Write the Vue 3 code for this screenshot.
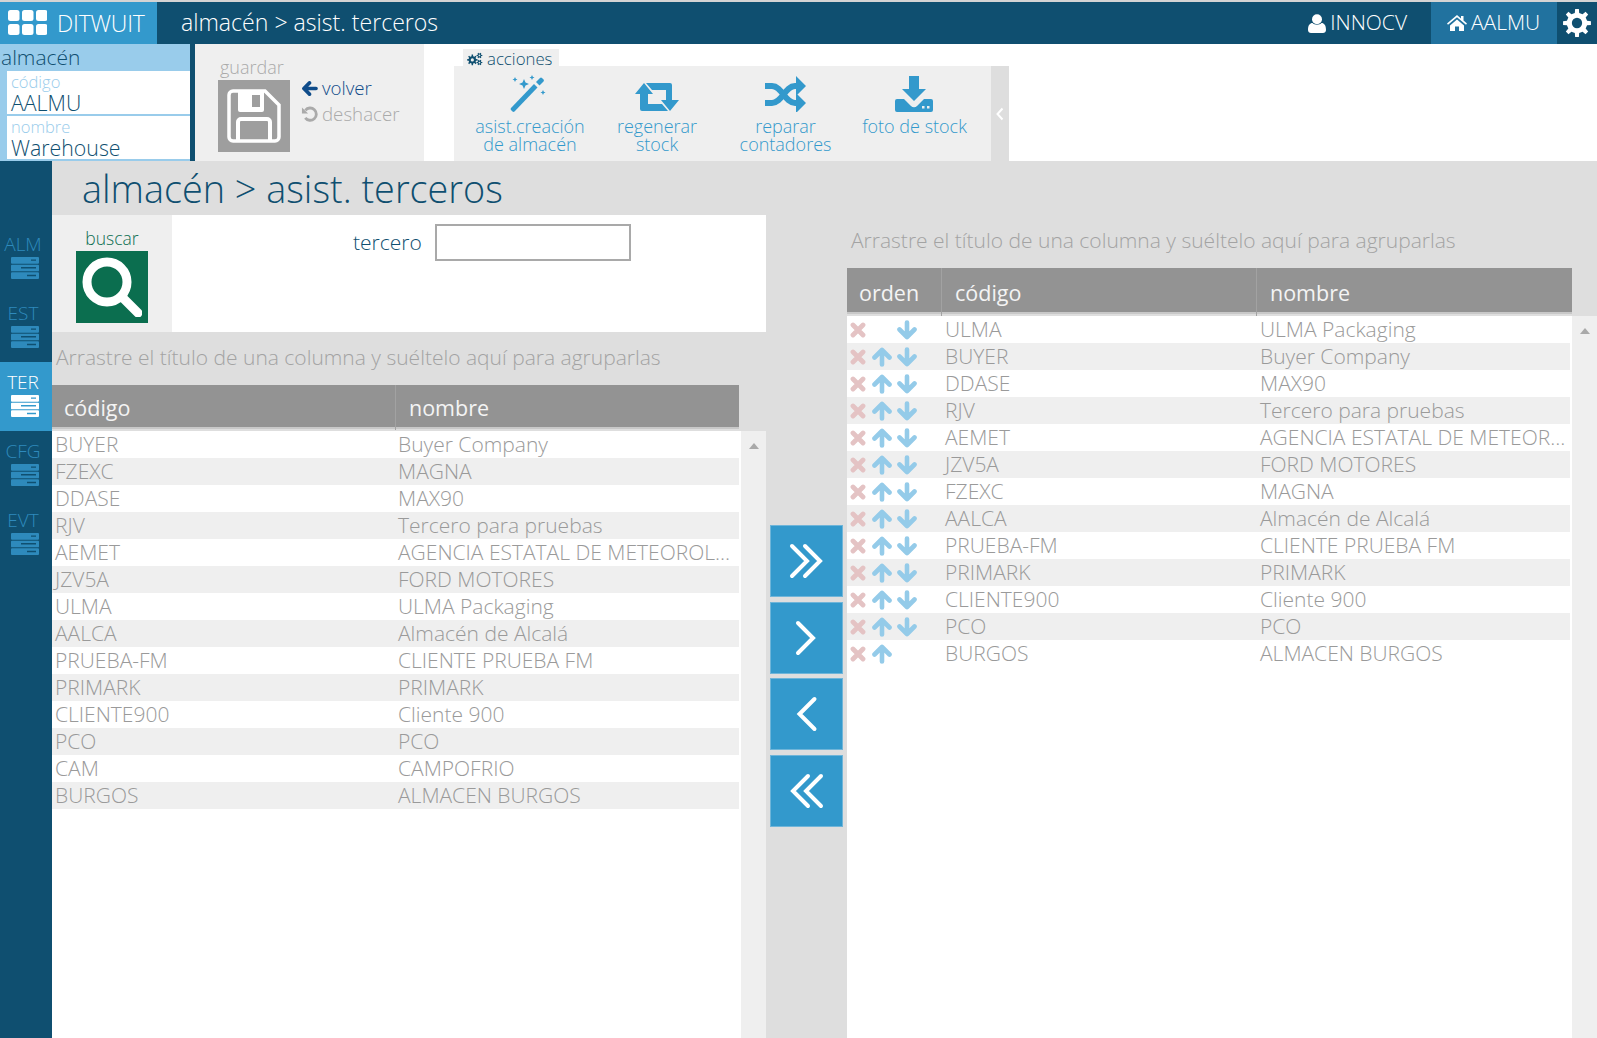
<template>
  <div class="app">
    <svg class="defs" width="0" height="0">
      <defs>
        <symbol id="server" viewBox="0 0 28 23" preserveAspectRatio="none">
          <path d="M0 1a1 1 0 0 1 1-1h26a1 1 0 0 1 1 1v5a1 1 0 0 1-1 1H1a1 1 0 0 1-1-1zM20 2.500V4h5V2.500zM0 9a1 1 0 0 1 1-1h26a1 1 0 0 1 1 1v5a1 1 0 0 1-1 1H1a1 1 0 0 1-1-1zM10 10.500V12h15v-1.500zM0 17a1 1 0 0 1 1-1h26a1 1 0 0 1 1 1v5a1 1 0 0 1-1 1H1a1 1 0 0 1-1-1zM16 18.500V20h9v-1.500z" fill-rule="evenodd" fill="currentColor" />
        </symbol>
        <symbol id="times" viewBox="0 0 16 16">
          <path d="M3 3l10 10M13 3L3 13" stroke="currentColor" stroke-width="4.800" stroke-linecap="round" fill="none" />
        </symbol>
        <symbol id="up" viewBox="0 0 20 20">
          <path d="M10 17.500V4M2.500 10.500L10 3l7.500 7.500" stroke="currentColor" stroke-width="4.600" stroke-linecap="round" stroke-linejoin="round" fill="none" />
        </symbol>
        <symbol id="down" viewBox="0 0 20 20">
          <path d="M10 2.500V16M2.500 9.500L10 17l7.500-7.500" stroke="currentColor" stroke-width="4.600" stroke-linecap="round" stroke-linejoin="round" fill="none" />
        </symbol>
      </defs>
    </svg>

    <header class="topbar">
      <div class="brand">
        <svg class="grid-icon" viewBox="0 0 39 26" width="39" height="26">
          <rect v-for="c in brandDots" :key="c.x + '-' + c.y" :x="c.x" :y="c.y" width="11.5" height="11" rx="2.5" fill="#fff" />
        </svg>
        <span>DITWUIT</span>
      </div>
      <div class="crumb">almacén &gt; asist. terceros</div>
      <div class="top-right">
        <div class="top-link">
          <svg viewBox="0 0 18 19" width="18" height="19"><circle cx="9" cy="5.2" r="5" fill="#fff" /><path d="M0 16c0-5 2-7 4.500-7 1 1 2.700 1.700 4.500 1.700S12.500 10 13.500 9C16 9 18 11 18 16c0 2-1.400 3-3 3H3c-1.600 0-3-1-3-3z" fill="#fff" /></svg>
          INNOCV
        </div>
        <div class="top-link active">
          <svg viewBox="0 0 20 16" width="20" height="16"><path d="M10 0L0 8.500l1 1.200L10 2.200l9 7.500 1-1.200-3.500-3V1h-2.500v2.500zM3 10.500V16h5v-4.500h4V16h5v-5.500L10 4.500z" fill="#fff" /></svg>
          AALMU
        </div>
        <div class="top-gear">
          <svg viewBox="0 0 32 32" width="30" height="30"><path :d="gear(16, 16, 15, 11, 5.500, 8)" fill="#fff" fill-rule="evenodd" /></svg>
        </div>
      </div>
    </header>

    <section class="ribbon">
      <div class="entity">
        <div class="entity-title">almacén</div>
        <div class="entity-field">
          <label>código</label>
          <span>AALMU</span>
        </div>
        <div class="entity-field">
          <label>nombre</label>
          <span>Warehouse</span>
        </div>
      </div>

      <div class="save-box">
        <div class="save-col">
          <div class="save-label">guardar</div>
          <div class="save-btn">
            <svg viewBox="0 0 54 54" width="54" height="54">
              <path d="M2 6a4 4 0 0 1 4-4h32l14 14v32a4 4 0 0 1-4 4H6a4 4 0 0 1-4-4z" fill="none" stroke="#fff" stroke-width="3.500" />
              <path d="M11 3v18a2 2 0 0 0 2 2h22a2 2 0 0 0 2-2V3z" fill="#fff" />
              <rect x="25" y="6" width="8" height="12" fill="#9e9e9e" />
              <path d="M11 51V33a3 3 0 0 1 3-3h26a3 3 0 0 1 3 3v18" fill="none" stroke="#fff" stroke-width="4" />
            </svg>
          </div>
        </div>
        <div class="save-links">
          <div class="link-back">
            <svg viewBox="0 0 18 16" width="17" height="15"><path d="M16 8H4M9 2L3 8l6 6" stroke="#0f4c8a" stroke-width="3.800" fill="none" stroke-linecap="round" stroke-linejoin="round" /></svg>
            volver
          </div>
          <div class="link-undo">
            <svg viewBox="0 0 18 18" width="17" height="17"><path d="M4.500 12.500A6.500 6.500 0 1 0 4.600 4.600" stroke="#aaa" stroke-width="3" fill="none" /><path d="M1 1.500v6.500h6.500z" fill="#aaa" /></svg>
            deshacer
          </div>
        </div>
      </div>

      <div class="actions">
        <div class="actions-tab">
          <svg viewBox="0 0 18 15" width="16" height="14">
            <path :d="gear(6, 8.500, 6, 4.300, 1.800, 8)" fill="#0f4f70" fill-rule="evenodd" />
            <path :d="gear(14, 3.500, 3.300, 2.300, 1, 6)" fill="#0f4f70" fill-rule="evenodd" />
            <path :d="gear(14, 11.500, 3.300, 2.300, 1, 6)" fill="#0f4f70" fill-rule="evenodd" />
          </svg>
          acciones
        </div>
        <div class="actions-body">
          <div class="action a1">
            <svg viewBox="0 0 38 40" width="38" height="40">
              <path d="M2 34L25 10l3.500 3.500L5.500 37.500a1.500 1.500 0 0 1-2 0L2 36a1.500 1.500 0 0 1 0-2z" fill="#3399cc" />
              <path d="M27 8l4-4a1.500 1.500 0 0 1 2 0l1.500 1.500a1.500 1.500 0 0 1 0 2l-4 4z" fill="#3399cc" />
              <path d="M15 5l1.500 3.500L20 10l-3.500 1.500L15 15l-1.500-3.500L10 10l3.500-1.500zM6 3l.8 1.700 1.700.8-1.700.8L6 8l-.8-1.700-1.700-.8 1.700-.8zM23 1l.8 1.700 1.700.8-1.700.8-.8 1.700-.8-1.700-1.700-.8 1.700-.8zM34 16l.8 1.700 1.700.8-1.700.8-.8 1.700-.8-1.700-1.700-.8 1.700-.8z" fill="#3399cc" />
            </svg>
            <div>asist.creación<br />de almacén</div>
          </div>
          <div class="action a2">
            <svg viewBox="0 0 44 30" width="44" height="30">
              <path d="M0 12L9 1l9 11h-5v10h14l6 7H7a2 2 0 0 1-2-2V12zM11 1h24a2 2 0 0 1 2 2v0 15h7l-9 11-9-11h5V8H17z" fill="#3399cc" />
            </svg>
            <div>regenerar<br />stock</div>
          </div>
          <div class="action a3">
            <svg viewBox="0 0 42 36" width="42" height="36">
              <path d="M1 10h7c10 0 13 17 23 17h3M1 27h7c10 0 13-17 23-17h3" stroke="#3399cc" stroke-width="6" fill="none" />
              <path d="M32 0l10 10-10 10zM32 17l10 10-10 10z" fill="#3399cc" />
            </svg>
            <div>reparar<br />contadores</div>
          </div>
          <div class="action a4">
            <svg viewBox="0 0 38 36" width="38" height="36">
              <path d="M14 0h10v13h7L19 25 7 13h7z" fill="#3399cc" />
              <path d="M0 25a2 2 0 0 1 2-2h7l7 7a4 4 0 0 0 6 0l7-7h7a2 2 0 0 1 2 2v9a2 2 0 0 1-2 2H2a2 2 0 0 1-2-2z" fill="#3399cc" />
              <rect x="27" y="30" width="2.500" height="2.500" fill="#efefef" /><rect x="32" y="30" width="2.500" height="2.500" fill="#efefef" />
            </svg>
            <div>foto de stock</div>
          </div>
        </div>
        <div class="actions-collapse">
          <svg viewBox="0 0 8 14" width="8" height="14"><path d="M6.500 1.500L1.500 7l5 5.500" stroke="#fff" stroke-width="2" fill="none" /></svg>
        </div>
      </div>
    </section>

    <div class="workspace">
      <nav class="sidenav">
        <div v-for="item in navItems" :key="item" class="nav-item" :class="{ active: item === 'TER' }">
          <span>{{ item }}</span>
          <svg width="28" height="22"><use href="#server" width="28" height="22" /></svg>
        </div>
      </nav>

      <main class="content">
        <h1 class="page-title">almacén &gt; asist. terceros</h1>
        <div class="columns">
          <div class="left-col">
            <div class="search-row">
              <div class="search-btn-box">
                <div class="search-label">buscar</div>
                <div class="search-btn">
                  <svg viewBox="0 0 60 60" width="60" height="60">
                    <circle cx="25" cy="25" r="20" fill="none" stroke="#fff" stroke-width="9" />
                    <path d="M40 40l16 16" stroke="#fff" stroke-width="9" stroke-linecap="round" />
                  </svg>
                </div>
              </div>
              <div class="search-fields">
                <label>tercero</label>
                <input type="text" />
              </div>
            </div>
            <div class="group-bar">Arrastre el título de una columna y suéltelo aquí para agruparlas</div>
            <div class="grid-head left-grid">
              <div>código</div>
              <div>nombre</div>
            </div>
            <div class="grid-body">
              <div class="rows">
                <div v-for="row in available" :key="row[0]" class="row left-grid">
                  <div class="cell">{{ row[0] }}</div>
                  <div class="cell">{{ row[1] }}</div>
                </div>
              </div>
              <div class="scroll"><i></i></div>
            </div>
          </div>

          <div class="move-col">
            <button v-for="b in moveButtons" :key="b" class="move-btn">
              <svg viewBox="0 0 40 40" width="40" height="40"><path :d="b" stroke="#fff" stroke-width="4" fill="none" stroke-linecap="round" /></svg>
            </button>
          </div>

          <div class="right-col">
            <div class="group-bar">Arrastre el título de una columna y suéltelo aquí para agruparlas</div>
            <div class="grid-head right-grid">
              <div>orden</div>
              <div>código</div>
              <div>nombre</div>
            </div>
            <div class="grid-body">
              <div class="rows">
                <div v-for="(row, i) in assigned" :key="row[0]" class="row right-grid">
                  <div class="order-cell">
                    <svg class="ic-x" width="16" height="16"><use href="#times" /></svg>
                    <svg class="ic-a" width="20" height="20" :class="{ hidden: i === 0 }"><use href="#up" /></svg>
                    <svg class="ic-a" width="20" height="20" :class="{ hidden: i === assigned.length - 1 }"><use href="#down" /></svg>
                  </div>
                  <div class="cell">{{ row[0] }}</div>
                  <div class="cell">{{ row[1] }}</div>
                </div>
              </div>
              <div class="scroll"><i></i></div>
            </div>
          </div>
        </div>
      </main>
    </div>
  </div>
</template>

<script setup>
const navItems = ['ALM', 'EST', 'TER', 'CFG', 'EVT']

const brandDots = [0, 14, 28].flatMap((x) => [0, 14].map((y) => ({ x, y })))

const moveButtons = [
  'M5 5l15 15-15 15M18 5l15 15-15 15',
  'M11 5l15 15-15 15',
  'M27.500 5L12.500 20l15 15',
  'M21 5L6 20l15 15M34 5L19 20l15 15',
]

const available = [
  ['BUYER', 'Buyer Company'],
  ['FZEXC', 'MAGNA'],
  ['DDASE', 'MAX90'],
  ['RJV', 'Tercero para pruebas'],
  ['AEMET', 'AGENCIA ESTATAL DE METEOROLOGIA'],
  ['JZV5A', 'FORD MOTORES'],
  ['ULMA', 'ULMA Packaging'],
  ['AALCA', 'Almacén de Alcalá'],
  ['PRUEBA-FM', 'CLIENTE PRUEBA FM'],
  ['PRIMARK', 'PRIMARK'],
  ['CLIENTE900', 'Cliente 900'],
  ['PCO', 'PCO'],
  ['CAM', 'CAMPOFRIO'],
  ['BURGOS', 'ALMACEN BURGOS'],
]

const assigned = [
  ['ULMA', 'ULMA Packaging'],
  ['BUYER', 'Buyer Company'],
  ['DDASE', 'MAX90'],
  ['RJV', 'Tercero para pruebas'],
  ['AEMET', 'AGENCIA ESTATAL DE METEOROLOGIA'],
  ['JZV5A', 'FORD MOTORES'],
  ['FZEXC', 'MAGNA'],
  ['AALCA', 'Almacén de Alcalá'],
  ['PRUEBA-FM', 'CLIENTE PRUEBA FM'],
  ['PRIMARK', 'PRIMARK'],
  ['CLIENTE900', 'Cliente 900'],
  ['PCO', 'PCO'],
  ['BURGOS', 'ALMACEN BURGOS'],
]

// toothed wheel with a round hole, for the cog icons
const gear = (cx, cy, outer, inner, hole, teeth) => {
  const pts = []
  const step = (Math.PI * 2) / teeth
  for (let i = 0; i < teeth; i++) {
    const a = i * step
    const w = step * 0.2
    const pt = (r, t) => `${(cx + r * Math.cos(t)).toFixed(2)} ${(cy + r * Math.sin(t)).toFixed(2)}`
    pts.push(pt(inner, a - w * 1.35), pt(outer, a - w * 0.85), pt(outer, a + w * 0.85), pt(inner, a + w * 1.35))
  }
  return `M${pts.join('L')}ZM${cx - hole} ${cy}a${hole} ${hole} 0 1 0 ${hole * 2} 0a${hole} ${hole} 0 1 0 ${-hole * 2} 0Z`
}
</script>

<style>
html,
body {
  margin: 0;
  background: #fff;
}
</style>

<style scoped>
* {
  box-sizing: border-box;
}

.app {
  width: 1597px;
  height: 1038px;
  overflow: hidden;
  display: flex;
  flex-direction: column;
  font-family: 'Open Sans', 'Liberation Sans', sans-serif;
  font-weight: 300;
  border-top: 2px solid #d4d4d4;
}

.defs {
  position: absolute;
}

.topbar {
  height: 42px;
  flex: none;
  display: flex;
  align-items: center;
  background: #0f4f70;
  color: #fff;
}

.brand {
  width: 157px;
  height: 100%;
  background: #3399cc;
  display: flex;
  align-items: center;
  gap: 10px;
  padding-left: 8px;
  font-size: 23px;
  letter-spacing: -0.2px;
}

.brand span {
  padding-bottom: 1px;
}

.crumb {
  margin-left: 24px;
  padding-bottom: 2px;
  font-size: 23.100px;
}

.top-right {
  margin-left: auto;
  display: flex;
  height: 100%;
}

.top-link {
  display: flex;
  align-items: center;
  gap: 4px;
  font-size: 21px;
  padding: 0 24px 2px 0;
}

.top-link svg {
  margin-top: 2px;
}

.top-link.active {
  width: 126px;
  padding: 0 0 2px 16px;
  background: #21729f;
}

.top-gear {
  width: 40px;
  display: flex;
  align-items: center;
  justify-content: center;
}

.ribbon {
  height: 117px;
  flex: none;
  display: flex;
}

.entity {
  width: 195px;
  background: #99cceb;
  border-right: 5px solid #0f4f70;
  color: #0f4f70;
}

.entity-title {
  height: 27px;
  line-height: 27px;
  padding-left: 1px;
  font-size: 21px;
}

.entity-field {
  margin-left: 7px;
  height: 45px;
  background: #fff;
  border-bottom: 2px solid #99cceb;
  display: flex;
  flex-direction: column;
  padding-left: 4px;
  line-height: 21px;
}

.entity-field label {
  font-size: 16.500px;
  color: #99cceb;
}

.entity-field span {
  font-size: 21.300px;
}

.save-box {
  width: 229px;
  background: #efefef;
  display: flex;
  padding: 11px 0 0 23px;
}

.save-label {
  color: #aaa;
  font-size: 18px;
  line-height: 25px;
  padding-left: 2px;
}

.save-btn {
  width: 72px;
  height: 72px;
  background: #9e9e9e;
  display: flex;
  align-items: center;
  justify-content: center;
}

.save-links {
  padding: 20px 0 0 11px;
  font-size: 18.700px;
  line-height: 26px;
}

.link-back {
  color: #0f4c8a;
  display: flex;
  align-items: center;
  gap: 4px;
}

.link-undo {
  color: #aaa;
  display: flex;
  align-items: center;
  gap: 4px;
}

.actions {
  margin-left: 30px;
  width: 555px;
  display: grid;
  grid-template-columns: 537px 18px;
  grid-template-rows: 22px 95px;
}

.actions-tab {
  grid-column: 1 / 3;
  margin: 5px 0 0 9px;
  width: 96px;
  height: 17px;
  background: #efefef;
  color: #0f4f70;
  font-size: 16.800px;
  line-height: 19px;
  display: flex;
  align-items: flex-start;
  gap: 4px;
  padding-left: 4px;
}

.actions-tab svg {
  margin-top: 3px;
}

.actions-body {
  background: #efefef;
  display: flex;
  color: #3399cc;
  font-size: 18px;
  line-height: 18px;
  text-align: center;
}

.action {
  display: flex;
  flex-direction: column;
  align-items: center;
  justify-content: flex-end;
  height: 87px;
  width: 129px;
  gap: 5px;
  white-space: nowrap;
}

.action.a1 {
  width: 152px;
  gap: 3px;
}

.action.a1 svg {
  margin-left: -4px;
}

.action.a2 {
  width: 102px;
}

.action.a3 {
  width: 155px;
}

.action.a3 svg {
  margin-left: -2px;
}

.action.a4 {
  width: 103px;
  justify-content: flex-start;
  padding-top: 10px;
}

.action.a4 svg {
  margin-left: -2px;
}

.actions-collapse {
  background: #dedede;
  display: flex;
  align-items: center;
  justify-content: center;
}

.workspace {
  flex: 1;
  display: flex;
  min-height: 0;
}

.sidenav {
  width: 52px;
  flex: none;
  background: #0f4f70;
  padding-top: 63px;
  color: #2e8abc;
}

.nav-item {
  height: 69px;
  display: flex;
  flex-direction: column;
  align-items: center;
  padding: 8px 6px 0 0;
  font-size: 19px;
  line-height: 25px;
}

.nav-item.active {
  background: #3399cc;
  color: #fff;
}

.nav-item svg {
  margin-left: 3px;
}

.content {
  flex: 1;
  background: #dedede;
  display: flex;
  flex-direction: column;
  min-width: 0;
}

.page-title {
  margin: 0;
  height: 54px;
  line-height: 56px;
  padding-left: 30px;
  font-size: 37.800px;
  font-weight: 300;
  color: #0f4f70;
}

.columns {
  flex: 1;
  display: flex;
  min-height: 0;
}

.left-col {
  width: 714px;
  display: flex;
  flex-direction: column;
}

.right-col {
  flex: 1;
  display: flex;
  flex-direction: column;
  min-width: 0;
}

.search-row {
  height: 117px;
  flex: none;
  display: flex;
  background: #fff;
}

.search-btn-box {
  width: 120px;
  background: #efefef;
  display: flex;
  flex-direction: column;
  align-items: center;
  padding-top: 11px;
}

.search-label {
  color: #0b6e4f;
  font-size: 17.500px;
  line-height: 25px;
}

.search-btn {
  width: 72px;
  height: 72px;
  background: #0b6e4f;
  display: flex;
  align-items: center;
  justify-content: center;
}

.search-fields {
  display: flex;
  align-items: center;
  align-self: flex-start;
  padding: 9px 0 0 181px;
  gap: 13px;
}

.search-fields label {
  color: #0f4f70;
  font-size: 21px;
  margin-top: -2px;
}

.search-fields input {
  width: 196px;
  height: 37px;
  border: 2px solid #a9a9a9;
  background: #fff;
}

.group-bar {
  height: 53px;
  flex: none;
  line-height: 50px;
  padding-left: 4px;
  font-size: 21px;
  color: #a3a3a3;
}

.grid-head {
  flex: none;
  height: 44px;
  margin-right: 27px;
  background: #939393;
  color: #f4f4f4;
  font-size: 21.500px;
  font-weight: 400;
  line-height: 45px;
  border-bottom: 2px solid #c8c8c8;
}

.right-col .grid-head {
  height: 46px;
  margin-right: 25px;
  line-height: 50px;
}

.grid-head > div {
  padding-left: 12px;
  border-left: 1px solid #a2a2a2;
}

.grid-head > div:first-child {
  border-left: 0;
}

.left-grid {
  display: grid;
  grid-template-columns: 343px 1fr;
}

.grid-head.left-grid > div + div {
  padding-left: 13px;
}

.right-grid {
  display: grid;
  grid-template-columns: 94px 315px 1fr;
}

.right-col .grid-head > div + div {
  padding-left: 13px;
}

.grid-body {
  flex: 1;
  display: flex;
  min-height: 0;
  background: #fff;
  margin-top: 2px;
}

.rows {
  flex: 1;
  min-width: 0;
  margin-right: 2px;
}

.row {
  height: 27px;
  line-height: 27px;
  font-size: 21px;
  color: #9a9a9a;
}

.row:nth-child(even) {
  background: #efefef;
}

.cell {
  padding-left: 3px;
  padding-right: 2px;
  overflow: hidden;
  white-space: nowrap;
  text-overflow: ellipsis;
}

.right-grid .cell {
  padding-left: 4px;
}

.scroll {
  width: 25px;
  flex: none;
  background: #efefef;
  display: flex;
  justify-content: center;
  padding-top: 12px;
}

.scroll i {
  width: 0;
  height: 0;
  border-left: 5px solid transparent;
  border-right: 5px solid transparent;
  border-bottom: 6px solid #a9a9a9;
}

.order-cell {
  display: flex;
  align-items: center;
  padding-left: 3px;
  gap: 5.500px;
}

.ic-x {
  color: #e4c3c4;
}

.ic-a {
  color: #94cbe9;
}

.ic-a.hidden {
  visibility: hidden;
}

.move-col {
  width: 81px;
  flex: none;
  display: flex;
  flex-direction: column;
  align-items: center;
  padding-top: 310px;
  gap: 4.500px;
}

.move-btn {
  width: 73px;
  height: 72px;
  padding: 0;
  background: #3399cc;
  border: 1px solid #6fb5d9;
  display: flex;
  align-items: center;
  justify-content: center;
}
</style>
